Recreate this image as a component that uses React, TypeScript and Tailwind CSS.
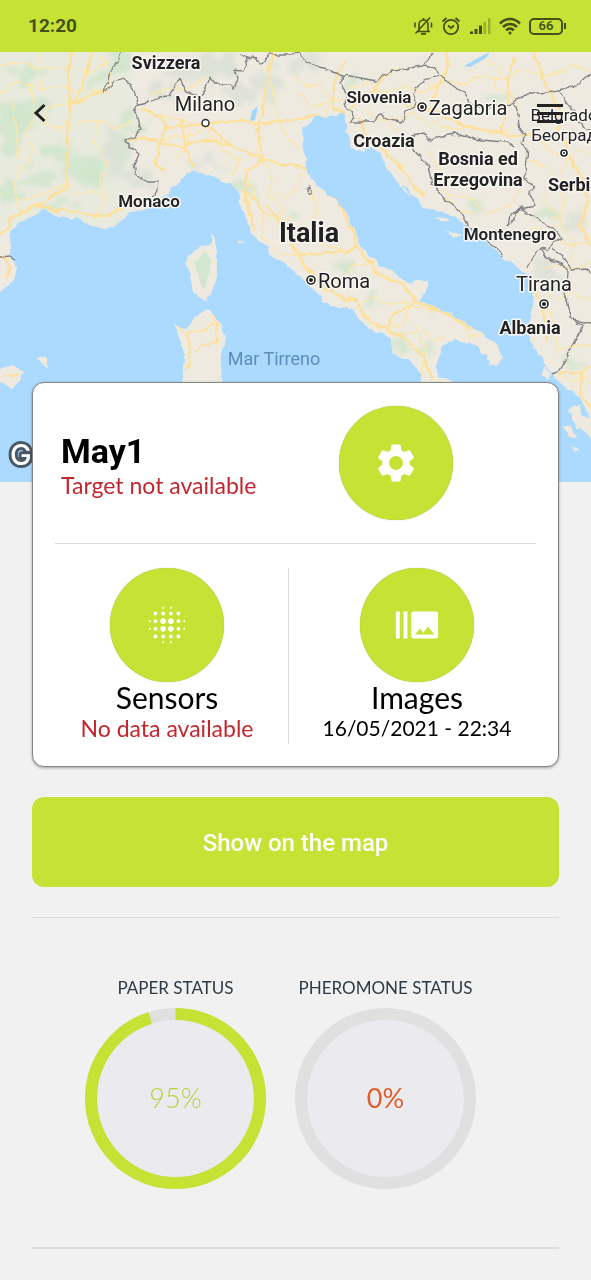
import React from "react";
import { MdBlurOn, MdBurstMode, MdSettings } from "react-icons/md";

const WEST_SEA =
  "M-20 292 L0 292 L8 284 L15 277 L17 268 L15 263 L10 256 L11 246 L10 237 L12 232 L20 223 L31 217 L42 210 L50 212 L60 217 L70 219 L78 218 L88 223 L100 228 L108 229 L115 227 L122 220 L130 212 L143 210 L158 202 L168 192 L177 183 L187 173 L197 171 L213 175 L222 181 L230 183 L238 193 L241 206 L248 220 L252 233 L258 242 L267 247 L272 254 L277 258 L290 268 L300 277 L313 290 L330 306 L342 307 L353 310 L362 323 L369 329 L380 333 L390 337 L393 352 L400 358 L407 358 L417 367 L420 375 L422 384 L430 420 L452 395 L453 381 L437 376 L437 363 L443 347 L453 340 L463 342 L477 347 L487 355 L490 365 L498 367 L502 357 L497 345 L480 332 L463 322 L450 313 L433 307 L420 300 L427 290 L427 280 L407 282 L390 270 L378 265 L370 256 L362 247 L357 238 L353 227 L345 210 L330 195 L312 180 L305 167 L305 150 L303 128 L315 118 L330 116 L343 112 L347 133 L353 147 L363 152 L370 146 L380 153 L390 173 L401 184 L413 193 L423 207 L447 213 L463 222 L480 237 L492 248 L503 258 L513 263 L520 270 L528 275 L535 300 L530 313 L530 343 L540 354 L546 368 L560 383 L580 398 L591 417 L610 430 L610 500 L-20 500 Z";

const ISLANDS = [
  "M213 233 L215 240 L217 253 L217 270 L212 293 L206 301 L195 292 L190 277 L187 262 L188 253 L200 248 L212 243 Z",
  "M173 325 L187 328 L200 313 L208 309 L220 323 L225 338 L222 357 L221 386 L183 386 L185 357 L180 340 Z",
  "M-10 368 L0 368 L12 364 L23 372 L20 382 L12 388 L0 382 L-10 382 Z",
  "M36 357 L45 358 L50 366 L42 364 Z",
  "M236 242 L244 241 L242 244 L236 244 Z",
  "M393 176 L402 186 L412 196 L405 192 Z",
  "M437 217 L448 219 L450 222 L440 221 Z",
  "M445 231 L462 235 L455 237 Z",
  "M543 368 L549 373 L548 381 L543 376 Z",
  "M568 410 L579 403 L583 416 L600 420 L600 448 L582 432 Z",
  "M562 428 L571 424 L577 437 L570 438 Z",
  "M571 446 L579 449 L577 454 Z",
];

const MINOR_ROADS = [
  "M0 93 L18 82 L40 89 L62 86 L80 92 L104 90 L110 96",
  "M0 66 L22 63 L40 70 L66 66 L90 72 L108 62",
  "M12 95 L16 130 L20 155 L14 190 L22 214",
  "M67 104 L48 107 L45 122 L58 130 L68 122 L71 104",
  "M72 125 L98 120 L118 128 L132 119",
  "M22 200 L40 196 L64 186 L78 196 L95 190 L105 200",
  "M30 88 L36 112 L26 134 L34 150 L24 170",
  "M98 120 L96 142 L106 162 L100 182 L108 200 L96 214",
  "M154 140 L168 138 L196 133 L214 122 L240 120 L262 122",
  "M150 112 L170 118 L190 122 L188 142 L178 158",
  "M205 125 L212 140 L224 150 L240 160 L232 176",
  "M270 80 L276 108 L284 135 L300 150",
  "M243 168 L252 190 L262 212 L280 222 L292 216",
  "M255 150 L272 172 L268 196 L282 208 L280 226",
  "M262 212 L262 236 L278 252 L295 255 L316 280",
  "M305 168 L298 186 L285 196 L272 193",
  "M312 190 L318 212 L312 226 L322 245 L346 250",
  "M316 280 L342 282 L352 266 L370 264",
  "M352 310 L372 296 L386 306 L400 302 L415 304",
  "M384 330 L402 322 L412 306 L433 311",
  "M398 334 L424 332 L436 340 L446 338",
  "M414 326 L426 350 L420 376",
  "M466 328 L468 336 L484 334",
  "M294 76 L306 88 L322 84 L330 104 L322 118",
  "M300 92 L312 106 L342 100",
  "M350 88 L370 82 L384 94 L404 86 L420 92 L436 84",
  "M366 100 L374 118 L392 120 L414 114 L430 126",
  "M386 118 L396 130 L392 144",
  "M430 90 L446 80 L465 84 L480 76 L506 80 L520 70 L550 76 L570 66 L591 70",
  "M486 60 L500 72 L494 88 L512 96 L520 110",
  "M434 122 L452 130 L470 126 L490 132 L514 128",
  "M428 150 L440 168 L436 184 L450 194 L474 200 L486 214 L510 206 L520 190",
  "M446 196 L456 210 L476 214",
  "M540 140 L552 152 L566 158 L578 150 L591 154",
  "M530 160 L546 168 L552 182 L544 200 L556 214 L550 236",
  "M566 160 L560 178 L566 200 L560 222 L574 240 L570 260",
  "M535 228 L552 234 L566 246 L591 242",
  "M536 280 L550 288 L548 312 L558 334 L556 350",
  "M558 300 L572 292 L584 300 L591 296",
  "M560 350 L578 344 L591 346",
  "M558 374 L570 382 L586 376 L591 386",
  "M540 268 L556 264 L572 270 L591 262",
  "M150 96 L168 88 L186 90 L206 78",
  "M100 56 L112 76 L108 90",
  "M40 52 L36 74 L44 90",
];

const MAJOR_ROADS = [
  "M72 52 L68 74 L70 104 L68 130 L67 160 L66 188 L42 203 L24 212",
  "M92 52 L88 70 L82 88 L72 104",
  "M24 212 L34 206 L60 210 L86 214 L104 216 L126 206 L140 204",
  "M0 235 L8 228 L10 218 L24 212",
  "M3 255 L10 268 L6 280",
  "M70 104 L92 96 L108 88",
  "M142 108 L160 116 L166 128 L180 126 L204 124 L234 121 L262 124 L290 120 L318 116",
  "M128 140 L144 138 L160 144 L182 146 L206 140 L232 146 L244 152 L262 158 L280 164 L305 168",
  "M166 128 L160 144 L154 162 L164 172",
  "M182 118 L184 146 L194 168",
  "M206 124 L222 138 L236 148",
  "M274 52 L266 80 L264 112 L258 128 L262 158",
  "M262 158 L248 170 L244 190 L256 200 L264 214",
  "M244 190 L250 214 L256 232",
  "M305 168 L322 184 L342 208 L352 230 L360 250 L374 268 L384 278 L404 284 L414 300 L432 308 L450 315 L472 330",
  "M266 204 L284 228 L300 256 L316 280",
  "M316 280 L334 294 L356 302 L370 322 L386 330 L400 336 L418 350 L427 366 L434 380",
  "M294 256 L318 254 L344 252 L360 248",
  "M384 330 L394 314 L414 304",
  "M346 60 L334 84 L334 108 L344 112",
  "M350 112 L360 100 L374 90 L386 74 L400 68",
  "M372 90 L388 98 L412 106 L432 110 L466 126 L512 136 L556 134",
  "M432 100 L440 84 L448 66 L446 52",
  "M534 52 L540 70 L550 92 L560 110 L558 130 L552 138",
  "M360 118 L366 138 L384 150 L400 168 L424 196",
  "M514 58 L508 80 L508 104 L500 132",
  "M560 134 L568 154 L580 174 L588 196 L580 226 L591 246",
  "M536 290 L544 310 L548 340",
  "M560 374 L582 372 L591 366",
  "M582 372 L580 394 L591 408",
];

const BORDERS = [
  "M121 52 L118 62 L110 74 L106 86 L104 92 L108 90 L112 82 L124 78 L130 84 L134 96 L138 104 L150 102 L160 98 L170 97 L174 88 L180 78 L184 88 L190 94 L200 96 L206 88 L210 77 L216 84 L226 84 L234 88 L238 78 L234 70 L242 71 L247 58 L240 54",
  "M247 58 L256 60 L262 63 L270 54 L290 54 L300 53 L305 62 L320 68 L345 75 L376 81 L388 72 L410 68 L424 66 L432 54",
  "M138 104 L132 110 L138 118 L141 128 L134 137 L126 140 L130 148 L138 154 L134 164 L136 176 L148 182 L158 182 L157 190 L153 196",
  "M345 75 L340 84 L346 92 L344 104 L354 116 L350 122 L374 122 L380 114 L390 120 L402 122 L406 112 L418 104 L412 94 L418 84 L430 78 L438 75",
  "M424 66 L434 68 L438 75 L452 84 L462 92 L470 104 L486 108 L512 104 L524 94 L540 94 L564 90 L580 84 L591 74",
  "M412 136 L424 134 L432 142 L442 136 L456 134 L480 140 L506 142 L514 148",
  "M414 136 L414 150 L428 166 L432 184 L450 204 L462 214 L468 226 L482 238 L500 252 L502 257",
  "M514 104 L518 116 L520 130 L526 136 L520 144 L528 149 L526 168 L522 178 L536 186 L530 192 L534 206 L516 210 L514 218 L508 226",
  "M508 226 L510 214 L522 208 L534 216 L546 224 L558 232 L562 238 L552 244 L548 250 L540 248 L528 268",
  "M560 92 L568 104 L576 118 L584 128 L591 130",
  "M540 248 L546 258 L560 262 L568 272 L566 296 L572 320 L582 324 L580 334 L572 344 L566 358 L558 372 L550 374",
  "M552 250 L562 256 L572 270 L586 268 L591 272",
  "M572 320 L591 323",
  "M307 190 L311 188 L311 193 L308 193 Z",
  "M0 257 L10 256 L15 259",
];

const WOODS = [
  [12, 130, 14, 26], [30, 108, 18, 12], [60, 152, 16, 9], [34, 178, 22, 10], [84, 168, 20, 10],
  [90, 182, 14, 8], [118, 58, 10, 16], [56, 205, 22, 5], [132, 120, 8, 12], [116, 146, 12, 16],
  [8, 195, 10, 14], [24, 72, 14, 6], [98, 76, 10, 8], [354, 82, 8, 6], [472, 206, 10, 5],
  [540, 110, 10, 7], [398, 348, 6, 8], [430, 316, 6, 4], [344, 268, 10, 6], [290, 214, 8, 4],
  [240, 190, 12, 8], [580, 362, 12, 5], [548, 210, 12, 8], [372, 302, 5, 4], [500, 96, 12, 6],
  [556, 284, 8, 5], [428, 352, 7, 5],
];

const RIDGES = [
  [200, 70, 42, 10], [244, 96, 22, 8], [160, 92, 16, 8], [114, 142, 8, 18], [120, 166, 12, 12],
  [142, 182, 14, 10], [306, 62, 14, 10], [268, 80, 16, 12], [208, 164, 14, 5], [545, 268, 8, 10],
  [575, 222, 10, 14], [222, 62, 18, 8],
];

type Label = { text: string; x: number; y: number; size: number; weight: number };

const LABELS: Label[] = [
  { text: "Svizzera", x: 166, y: 69, size: 18, weight: 700 },
  { text: "Milano", x: 205, y: 111, size: 20, weight: 400 },
  { text: "Monaco", x: 149, y: 207, size: 17, weight: 600 },
  { text: "Italia", x: 309, y: 242, size: 27, weight: 700 },
  { text: "Roma", x: 344, y: 288, size: 20, weight: 400 },
  { text: "Slovenia", x: 379, y: 103, size: 17, weight: 600 },
  { text: "Zagabria", x: 468, y: 115, size: 20, weight: 400 },
  { text: "Croazia", x: 384, y: 147, size: 18, weight: 700 },
  { text: "Bosnia ed", x: 478, y: 165, size: 18, weight: 700 },
  { text: "Erzegovina", x: 478, y: 186, size: 18, weight: 700 },
  { text: "Belgrado", x: 564, y: 121, size: 17, weight: 400 },
  { text: "Београд", x: 564, y: 141, size: 17, weight: 400 },
  { text: "Serbia", x: 574, y: 191, size: 18, weight: 700 },
  { text: "Montenegro", x: 510, y: 240, size: 17, weight: 600 },
  { text: "Tirana", x: 544, y: 291, size: 20, weight: 400 },
  { text: "Albania", x: 530, y: 334, size: 18, weight: 700 },
];

const CAPITALS = [[422, 107, 4], [311, 280, 4], [544, 304, 4], [564, 153, 3]];

function MapView() {
  return (
    <svg
      viewBox="0 52 591 430"
      preserveAspectRatio="xMidYMid slice"
      className="block h-full w-full font-[Roboto,sans-serif]"
      role="img"
      aria-label="Map of Italy"
    >
      <defs>
        <filter id="rough" x="-20" y="32" width="631" height="470" filterUnits="userSpaceOnUse" colorInterpolationFilters="sRGB">
          <feTurbulence type="fractalNoise" baseFrequency="0.1" numOctaves="2" seed="4" result="n" />
          <feDisplacementMap in="SourceGraphic" in2="n" scale="7" xChannelSelector="R" yChannelSelector="G" />
        </filter>
        <filter id="soft" x="-20" y="32" width="631" height="470" filterUnits="userSpaceOnUse" colorInterpolationFilters="sRGB">
          <feTurbulence type="fractalNoise" baseFrequency="0.06" numOctaves="3" seed="9" result="n" />
          <feDisplacementMap in="SourceGraphic" in2="n" scale="34" xChannelSelector="R" yChannelSelector="G" />
          <feGaussianBlur stdDeviation="2" />
        </filter>
      </defs>

      <rect x="0" y="52" width="591" height="430" fill="#eeeae0" />
      <rect x="0" y="52" width="132" height="175" fill="#e4eadb" opacity="0.5" />
      <g filter="url(#soft)">
        {WOODS.map(([x, y, rx, ry]) => (
          <ellipse key={`${x}-${y}`} cx={x} cy={y} rx={rx} ry={ry} fill="#cbe4c8" opacity="0.75" />
        ))}
        {RIDGES.map(([x, y, rx, ry]) => (
          <ellipse key={`${x}-${y}`} cx={x} cy={y} rx={rx} ry={ry} fill="#dce0d6" opacity="0.85" />
        ))}
      </g>
      <g filter="url(#rough)" fill="none" strokeLinejoin="round">
        {MINOR_ROADS.map((d) => <path key={d} d={d} stroke="#fbe6ae" strokeWidth="1.5" />)}
        {MAJOR_ROADS.map((d) => <path key={d} d={d} stroke="#fde09a" strokeWidth="2.5" />)}
      </g>
      <path d="M250 121 L252 111 L258 106 L255 120 Z M464 66 L478 58 L490 52 L486 58 L470 67 Z" fill="#a4d6fa" />
      <g filter="url(#rough)">
        <path d={WEST_SEA} fill="#acdaff" />
        {ISLANDS.map((d) => <path key={d} d={d} fill="#eeeae0" />)}
        <path d="M204 252 L211 258 L209 276 L204 290 L198 276 L196 262 Z" fill="#d3e6cf" />
        <path d="M178 327 L188 333 L200 332 L218 322 M188 333 L190 352 L187 370 M194 350 L218 340 L214 316 M2 376 L20 374" fill="none" stroke="#fde09a" strokeWidth="1.5" />
        {BORDERS.map((d) => <path key={d} d={d} fill="none" stroke="#828285" strokeWidth="1.300" strokeLinejoin="round" />)}
      </g>

      <circle cx="205.500" cy="123" r="3.500" fill="#fff" stroke="#333" strokeWidth="1.500" />
      {CAPITALS.map(([x, y, r]) => (
        <g key={`${x}-${y}`}>
          <circle cx={x} cy={y} r={r + 2} fill="#fff" />
          <circle cx={x} cy={y} r={r} fill="#fff" stroke="#222" strokeWidth="1.6" />
          <circle cx={x} cy={y} r={r - 2} fill="#222" />
        </g>
      ))}
      <g textAnchor="middle" stroke="#f8f6f0" strokeWidth="3" strokeLinejoin="round" paintOrder="stroke" fill="#222226">
        {LABELS.map((l) => (
          <text key={l.text} x={l.x} y={l.y} fontSize={l.size} fontWeight={l.weight}>{l.text}</text>
        ))}
      </g>
      <text x="274" y="365" textAnchor="middle" fontSize="18" fill="#5b8dbd">Mar Tirreno</text>
      <text x="10" y="465" className="font-[Inter,sans-serif]" fontSize="29" fontWeight="500" fill="#fff" stroke="#4a5864" strokeWidth="6" strokeLinejoin="round" paintOrder="stroke">Go</text>
    </svg>
  );
}

function StatusBar() {
  return (
    <header className="flex h-[52px] items-center justify-between bg-[#c6e335] pl-7 pr-[25px] text-[#46501a]">
      <span className="text-[19px] font-bold">12:20</span>
      <div className="flex items-center gap-2">
        <svg width="20" height="20" viewBox="0 0 20 20" fill="none" stroke="currentColor" strokeWidth="1.6">
          <path d="M4 15.500h13M6 15V9c0-3 1.600-5 4.500-5S15 6 15 9v6M10.500 2v2M2 6.500v5M18.500 6.500v5M2.500 17.500 17 1.500" />
          <path d="M8 17.800h5" strokeWidth="2" />
        </svg>
        <svg width="20" height="20" viewBox="0 0 20 20" fill="none" stroke="currentColor" strokeWidth="1.8">
          <circle cx="10" cy="11" r="7.200" />
          <path d="M1.500 5.500 5.500 2M18.500 5.500 14.500 2M7 9.500l3 2.500 3-2.500" />
        </svg>
        <svg width="22" height="20" viewBox="0 0 22 20" fill="currentColor">
          <path d="M1 15.500h3V18H1zM5.500 13h3v5h-3zM10 9.500h3V18h-3z" />
          <path d="M14.500 6H17v12h-2.500zM19 2h2.500v16H19z" opacity="0.35" />
        </svg>
        <svg width="22" height="20" viewBox="0 0 22 20" fill="none" stroke="currentColor" strokeWidth="2.600">
          <path d="M1 7.500c6-6 14-6 20 0M4 11c4-4 10-4 14 0M7.200 14.300c2.200-2.200 5.400-2.200 7.600 0" />
          <circle cx="11" cy="17" r="1.500" fill="currentColor" stroke="none" />
        </svg>
        <div className="flex items-center">
          <span className="flex h-[17px] w-[34px] items-center justify-center rounded-[5px] border-2 border-current text-[13px] font-semibold">66</span>
          <span className="ml-px h-1.5 w-0.5 bg-current" />
        </div>
      </div>
    </header>
  );
}

function RoundButton({ label, children }: { label: string; children: React.ReactNode }) {
  return (
    <button aria-label={label} className="flex size-[114px] shrink-0 items-center justify-center rounded-full bg-[#c6e335] text-[46px] text-white shadow-[0_0_1px_#8a9a30]">
      {children}
    </button>
  );
}

function Gauge({ title, value, textClass }: { title: string; value: number; textClass: string }) {
  const r = 84;
  const len = 2 * Math.PI * r;
  return (
    <div className="flex w-[181px] flex-col items-center">
      <h3 className="text-[17px] leading-6 whitespace-nowrap text-[#2f3a45]">{title}</h3>
      <div className="relative mt-2 flex size-[181px] items-center justify-center">
        <svg viewBox="0 0 180 180" className="absolute inset-0 -rotate-90" fill="none" strokeWidth="12">
          <circle cx="90" cy="90" r={r} fill="#ebeaef" stroke="#e0e0e0" />
          {value > 0 && (
            <circle cx="90" cy="90" r={r} stroke="#c6e335" strokeDasharray={`${(len * value) / 100} ${len}`} />
          )}
        </svg>
        <span className={`relative text-[27px] ${textClass}`}>{value}%</span>
      </div>
    </div>
  );
}

export default function App() {
  return (
    <div className="min-h-screen overflow-hidden bg-[#f1f1f1] font-[Lato,'Open_Sans',sans-serif] text-black">
      <div className="font-[Roboto,sans-serif]">
        <StatusBar />
      </div>

      <div className="relative h-[430px]">
        <MapView />
        <div className="absolute inset-x-0 top-[41px] flex h-10 items-center justify-between px-7">
          <button aria-label="Back" className="flex size-6 items-center justify-center">
            <svg width="14" height="20" viewBox="0 0 14 20" fill="none" stroke="#222" strokeWidth="3">
              <path d="M11.500 2 3 10l8.500 8" />
            </svg>
          </button>
          <button aria-label="Menu" className="flex h-6 w-[26px] flex-col justify-center gap-[5px]">
            <span className="h-[3px] w-full bg-[#222]" />
            <span className="h-[3px] w-full bg-[#222]" />
            <span className="h-[3px] w-full bg-[#222]" />
          </button>
        </div>
      </div>

      <main className="relative -mt-[100px] px-8">
        <section className="rounded-xl border border-[#858585] bg-white pb-[22px] shadow-[0_1px_3px_rgba(0,0,0,0.35)]">
          <div className="flex items-center justify-between pt-[23px] pr-[20%] pl-7">
            <div className="pt-2">
              <h1 className="font-[Roboto,sans-serif] text-[34px] leading-9 font-bold">May1</h1>
              <p className="text-[23px] leading-8 text-[#c4262e]">Target not available</p>
            </div>
            <RoundButton label="Settings"><MdSettings /></RoundButton>
          </div>

          <hr className="mx-[22px] mt-[23px] border-[#dcdcdc]" />

          <div className="mt-6 grid grid-cols-[243fr_256fr] px-[13px] text-center">
            <div className="flex flex-col items-center border-r border-[#dcdcdc]">
              <RoundButton label="Sensors"><MdBlurOn /></RoundButton>
              <h2 className="text-[30px] leading-[30px]">Sensors</h2>
              <p className="text-[23px] leading-8 text-[#c4262e]">No data available</p>
            </div>
            <div className="flex flex-col items-center">
              <RoundButton label="Images"><MdBurstMode /></RoundButton>
              <h2 className="text-[30px] leading-[30px]">Images</h2>
              <p className="text-[21px] leading-8">16/05/2021 - 22:34</p>
            </div>
          </div>
        </section>

        <button className="mt-[30px] h-[90px] w-full rounded-xl bg-[#c6e335] pt-0.5 font-[Roboto,sans-serif] text-2xl font-medium text-white">
          Show on the map
        </button>

        <hr className="mt-[30px] border-[#dcdcdc]" />

        <section className="mt-[58px] flex justify-center gap-[29px] pr-[30px]">
          <Gauge title="PAPER STATUS" value={95} textClass="font-light text-[#b5d33a]" />
          <Gauge title="PHEROMONE STATUS" value={0} textClass="text-[#dd5f2c]" />
        </section>

        <hr className="mt-[58px] mb-8 border-t-2 border-[#dcdcdc]" />
      </main>
    </div>
  );
}
